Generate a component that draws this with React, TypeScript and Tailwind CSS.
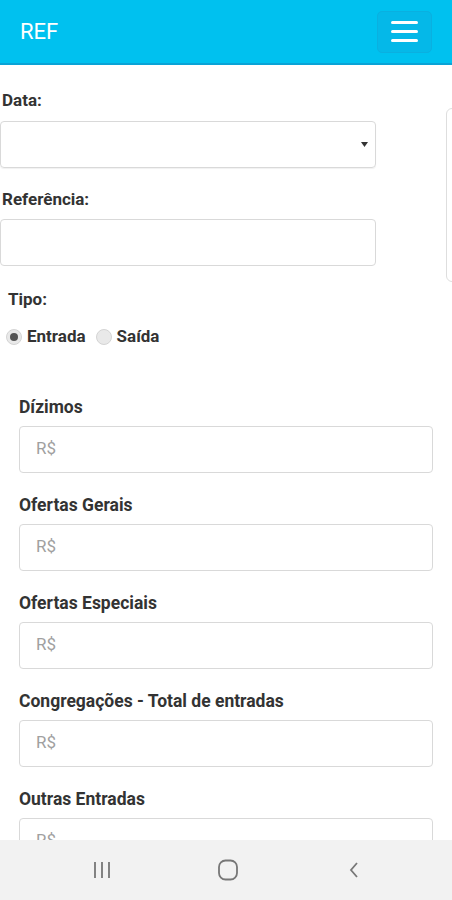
const FIELDS = [
  "Dízimos",
  "Ofertas Gerais",
  "Ofertas Especiais",
  "Congregações - Total de entradas",
  "Outras Entradas",
];

function Radio({ checked, label }: { checked?: boolean; label: string }) {
  return (
    <label className="flex items-center gap-[5px]">
      <span className="flex h-[16px] w-[16px] items-center justify-center rounded-full border border-[#d4d4d4] bg-[#e9e9e9]">
        {checked && <span className="h-[8px] w-[8px] rounded-full bg-[#555]" />}
      </span>
      <span className="text-[17px] font-bold text-[#333]">{label}</span>
    </label>
  );
}

function MoneyField({ label }: { label: string }) {
  return (
    <div className="flex flex-col">
      <span className="h-[21px] text-[17.5px] leading-[21px] font-bold text-[#333]">{label}</span>
      <div className="mt-[8px] flex h-[47px] items-center rounded-[4px] border border-[#d9d9d9] px-[16px] text-[17px] text-[#a0a0a0]">
        R$
      </div>
    </div>
  );
}

export default function App() {
  return (
    <div className="flex h-[900px] w-[452px] flex-col overflow-hidden bg-white font-['Roboto',sans-serif]">
      {/* Top bar */}
      <header className="flex h-[65px] shrink-0 items-center justify-between border-b-2 border-[#0aa3d6] bg-[#00c1ef] pl-[20px] pr-[20px]">
        <span className="text-[22px] text-white">REF</span>
        <button className="flex h-[42px] w-[55px] flex-col items-center justify-center gap-[6px] rounded-[5px] border border-[#0ab0e0] bg-[#05b8e8]">
          <span className="h-[3px] w-[27px] rounded bg-white" />
          <span className="h-[3px] w-[27px] rounded bg-white" />
          <span className="h-[3px] w-[27px] rounded bg-white" />
        </button>
      </header>

      <main className="flex-1 overflow-hidden">
        <div className="flex items-start gap-[70px] pt-[25px]">
          <div className="flex w-[376px] shrink-0 flex-col">
            <span className="pl-[2px] text-[17px] leading-[21px] font-bold text-[#333]">Data:</span>
            <div className="mt-[10px] flex h-[47px] items-center justify-end rounded-[4px] border border-[#d9d9d9] pr-[7px] shadow-[0_1px_1px_rgba(0,0,0,0.06)]">
              <svg width="7" height="5" viewBox="0 0 7 5">
                <path d="M0 0 H7 L3.5 5 Z" fill="#333" />
              </svg>
            </div>
            <span className="mt-[21px] pl-[2px] text-[17px] leading-[21px] font-bold text-[#333]">Referência:</span>
            <div className="mt-[9px] h-[47px] rounded-[4px] border border-[#d9d9d9]" />
          </div>
          <div className="mt-[18px] h-[174px] w-[40px] shrink-0 rounded-l-[6px] border border-[#dedede]" />
        </div>

        <div className="pl-[8px] pt-[6px]">
          <span className="text-[17px] leading-[21px] font-bold text-[#333]">Tipo:</span>
        </div>
        <div className="flex items-center gap-[10px] pl-[6px] pt-[12px]">
          <Radio checked label="Entrada" />
          <Radio label="Saída" />
        </div>

        <div className="flex flex-col gap-[22px] px-[19px] pt-[47px]">
          {FIELDS.map((f) => (
            <MoneyField key={f} label={f} />
          ))}
        </div>
      </main>

      {/* Android nav bar */}
      <nav className="flex h-[60px] shrink-0 items-center gap-[86px] bg-[#f2f2f2] pl-[82px]">
        <span className="flex w-[40px] justify-center">
          <svg width="22" height="18" viewBox="0 0 22 18">
            <path d="M4 1v16M11 1v16M18 1v16" stroke="#777" strokeWidth="1.8" />
          </svg>
        </span>
        <span className="flex w-[40px] justify-center">
          <svg width="22" height="22" viewBox="0 0 22 22">
            <rect x="2" y="1.5" width="18" height="19" rx="6.5" fill="none" stroke="#777" strokeWidth="1.8" />
          </svg>
        </span>
        <span className="flex w-[40px] justify-center">
          <svg width="14" height="20" viewBox="0 0 14 20">
            <path d="M10 3 L4 10 L10 17" fill="none" stroke="#777" strokeWidth="1.8" />
          </svg>
        </span>
      </nav>
    </div>
  );
}
